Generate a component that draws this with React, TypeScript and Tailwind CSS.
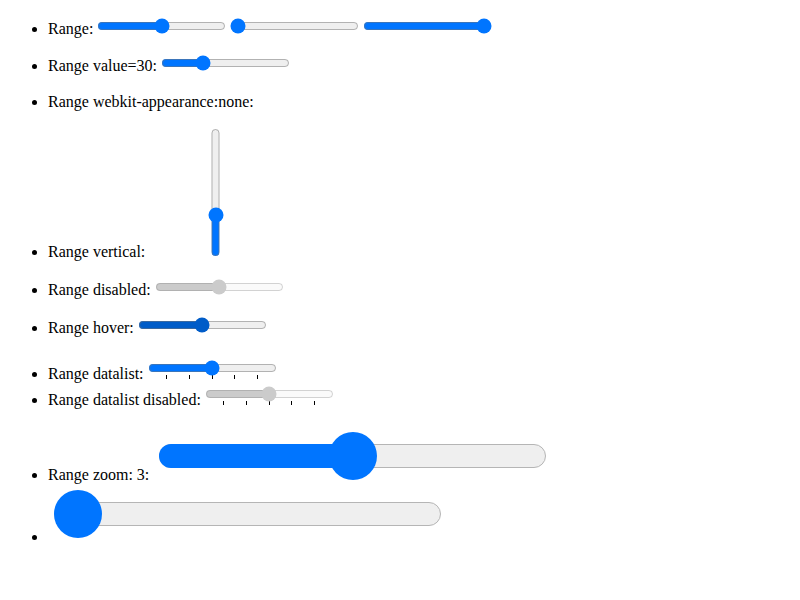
function ZoomRange({ value, className = '' }: { value: number; className?: string }) {
  // a range drawn at zoom 3, with a thin border like the reference
  const center = 24 + (339 * value) / 100
  return (
    <span className={`relative mx-[6px] inline-block h-[48px] w-[387px] align-baseline ${className}`}>
      <span className="relative mt-[12px] block h-[24px] w-full rounded-full border border-[#b5b5b5] bg-[#efefef]">
        {value > 0 && (
          <span
            className="absolute -left-px -top-px block h-[24px] rounded-full bg-[#0075ff]"
            style={{ width: center }}
          />
        )}
      </span>
      <span
        className="absolute top-0 block h-[48px] w-[48px] rounded-full bg-[#0075ff]"
        style={{ left: center - 24 }}
      />
    </span>
  )
}

export default function App() {
  return (
    <div className="min-h-screen bg-white p-2 font-['Liberation_Serif',serif] text-base leading-[normal] text-black">
      <ul className="mt-[10px] list-disc pl-10">
        <li className="mb-[17px]">
          Range: <input type="range" /> <input type="range" defaultValue={0} />{' '}
          <input type="range" defaultValue={100} />
        </li>
        <li className="mb-[18px]">
          Range value=30: <input type="range" defaultValue={30} />
        </li>
        <li className="mb-[17px]">Range webkit-appearance:none:</li>
        <li className="mb-[18px]">
          Range vertical:{' '}
          <input
            type="range"
            defaultValue={30}
            className="ml-[2px] h-[129px] w-[129px] [direction:rtl] [writing-mode:vertical-lr]"
          />
        </li>
        <li className="mb-[18px]">
          Range disabled: <input type="range" disabled />
        </li>
        <li className="mb-[20px]">
          Range hover: <input type="range" className="accent-[#005cc8]" />
        </li>
        <li>
          Range datalist: <input type="range" list="ticks" />
        </li>
        <li className="mb-[23px]">
          Range datalist disabled: <input type="range" list="ticks" disabled />
        </li>
        <li className="mb-[6px]">
          Range zoom: 3: <ZoomRange value={50} />
        </li>
        <li>
          <ZoomRange value={0} className="mb-[4px]" />
        </li>
      </ul>
      <datalist id="ticks">
        <option value="10" />
        <option value="30" />
        <option value="50" />
        <option value="70" />
        <option value="90" />
      </datalist>
    </div>
  )
}
